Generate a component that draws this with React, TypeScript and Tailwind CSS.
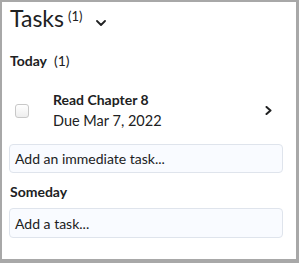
import React from 'react';

const ChevronDown = () => (
  <svg width="10" height="6" viewBox="0 0 10 6" fill="none" className="block">
    <path d="M1 1l4 4 4-4" stroke="#202122" strokeWidth="1.8" strokeLinecap="round" strokeLinejoin="round" />
  </svg>
);

const ChevronRight = () => (
  <svg width="7" height="9" viewBox="0 0 7 9" fill="none" className="block">
    <path d="M1.5 1l4 3.5-4 3.5" stroke="#202122" strokeWidth="2" strokeLinecap="round" strokeLinejoin="round" />
  </svg>
);

const TaskInput: React.FC<{ placeholder: string; tall?: boolean }> = ({ placeholder, tall }) => (
  <div
    className={
      'ml-[7px] mr-[13px] flex items-center px-[5px] rounded-[4px] border border-[#dfe4ec] bg-[#f9fbff] text-[14px] text-[#202122] ' +
      (tall ? 'h-[30px]' : 'h-[29px]')
    }
  >
    {placeholder}
  </div>
);

export default function App() {
  return (
    <div
      className="w-[299px] h-[263px] bg-white border-[#a8a8a8] border-t-2 border-l-2 border-r-[3px] border-b-4 overflow-hidden text-[#202122]"
      style={{ fontFamily: 'Lato, "Noto Sans", sans-serif' }}
    >
      <div className="flex items-start pl-[8px] pt-[2px]">
        <h2 className="text-[23px] leading-[28px] font-normal">Tasks</h2>
        <span className="ml-[4px] mt-[4px] text-[13px] leading-[16px]">(1)</span>
        <span className="ml-[14px] mt-[16px]">
          <ChevronDown />
        </span>
      </div>

      <div className="pl-[8px] mt-[21px] text-[14px] leading-[16px] flex">
        <span className="font-bold">Today</span>
        <span className="ml-[7px]">(1)</span>
      </div>

      <div className="flex items-center mt-[21px] pr-[24px]">
        <div className="ml-[13px] w-[14px] h-[14px] rounded-[3px] border border-[#c8c8c8] bg-gradient-to-b from-white to-[#eeeeee]" />
        <div className="ml-[24px] flex-1">
          <div className="font-bold text-[14px] leading-[20px]">Read Chapter 8</div>
          <div className="text-[14.5px] leading-[20px] mt-[1px] text-[#202122]">Due Mar 7, 2022</div>
        </div>
        <ChevronRight />
      </div>

      <div className="mt-[13px]">
        <TaskInput placeholder="Add an immediate task..." />
      </div>

      <div className="pl-[8px] mt-[10px] text-[14px] leading-[18px] font-bold">Someday</div>

      <div className="mt-[7px]">
        <TaskInput placeholder="Add a task..." tall />
      </div>
    </div>
  );
}
